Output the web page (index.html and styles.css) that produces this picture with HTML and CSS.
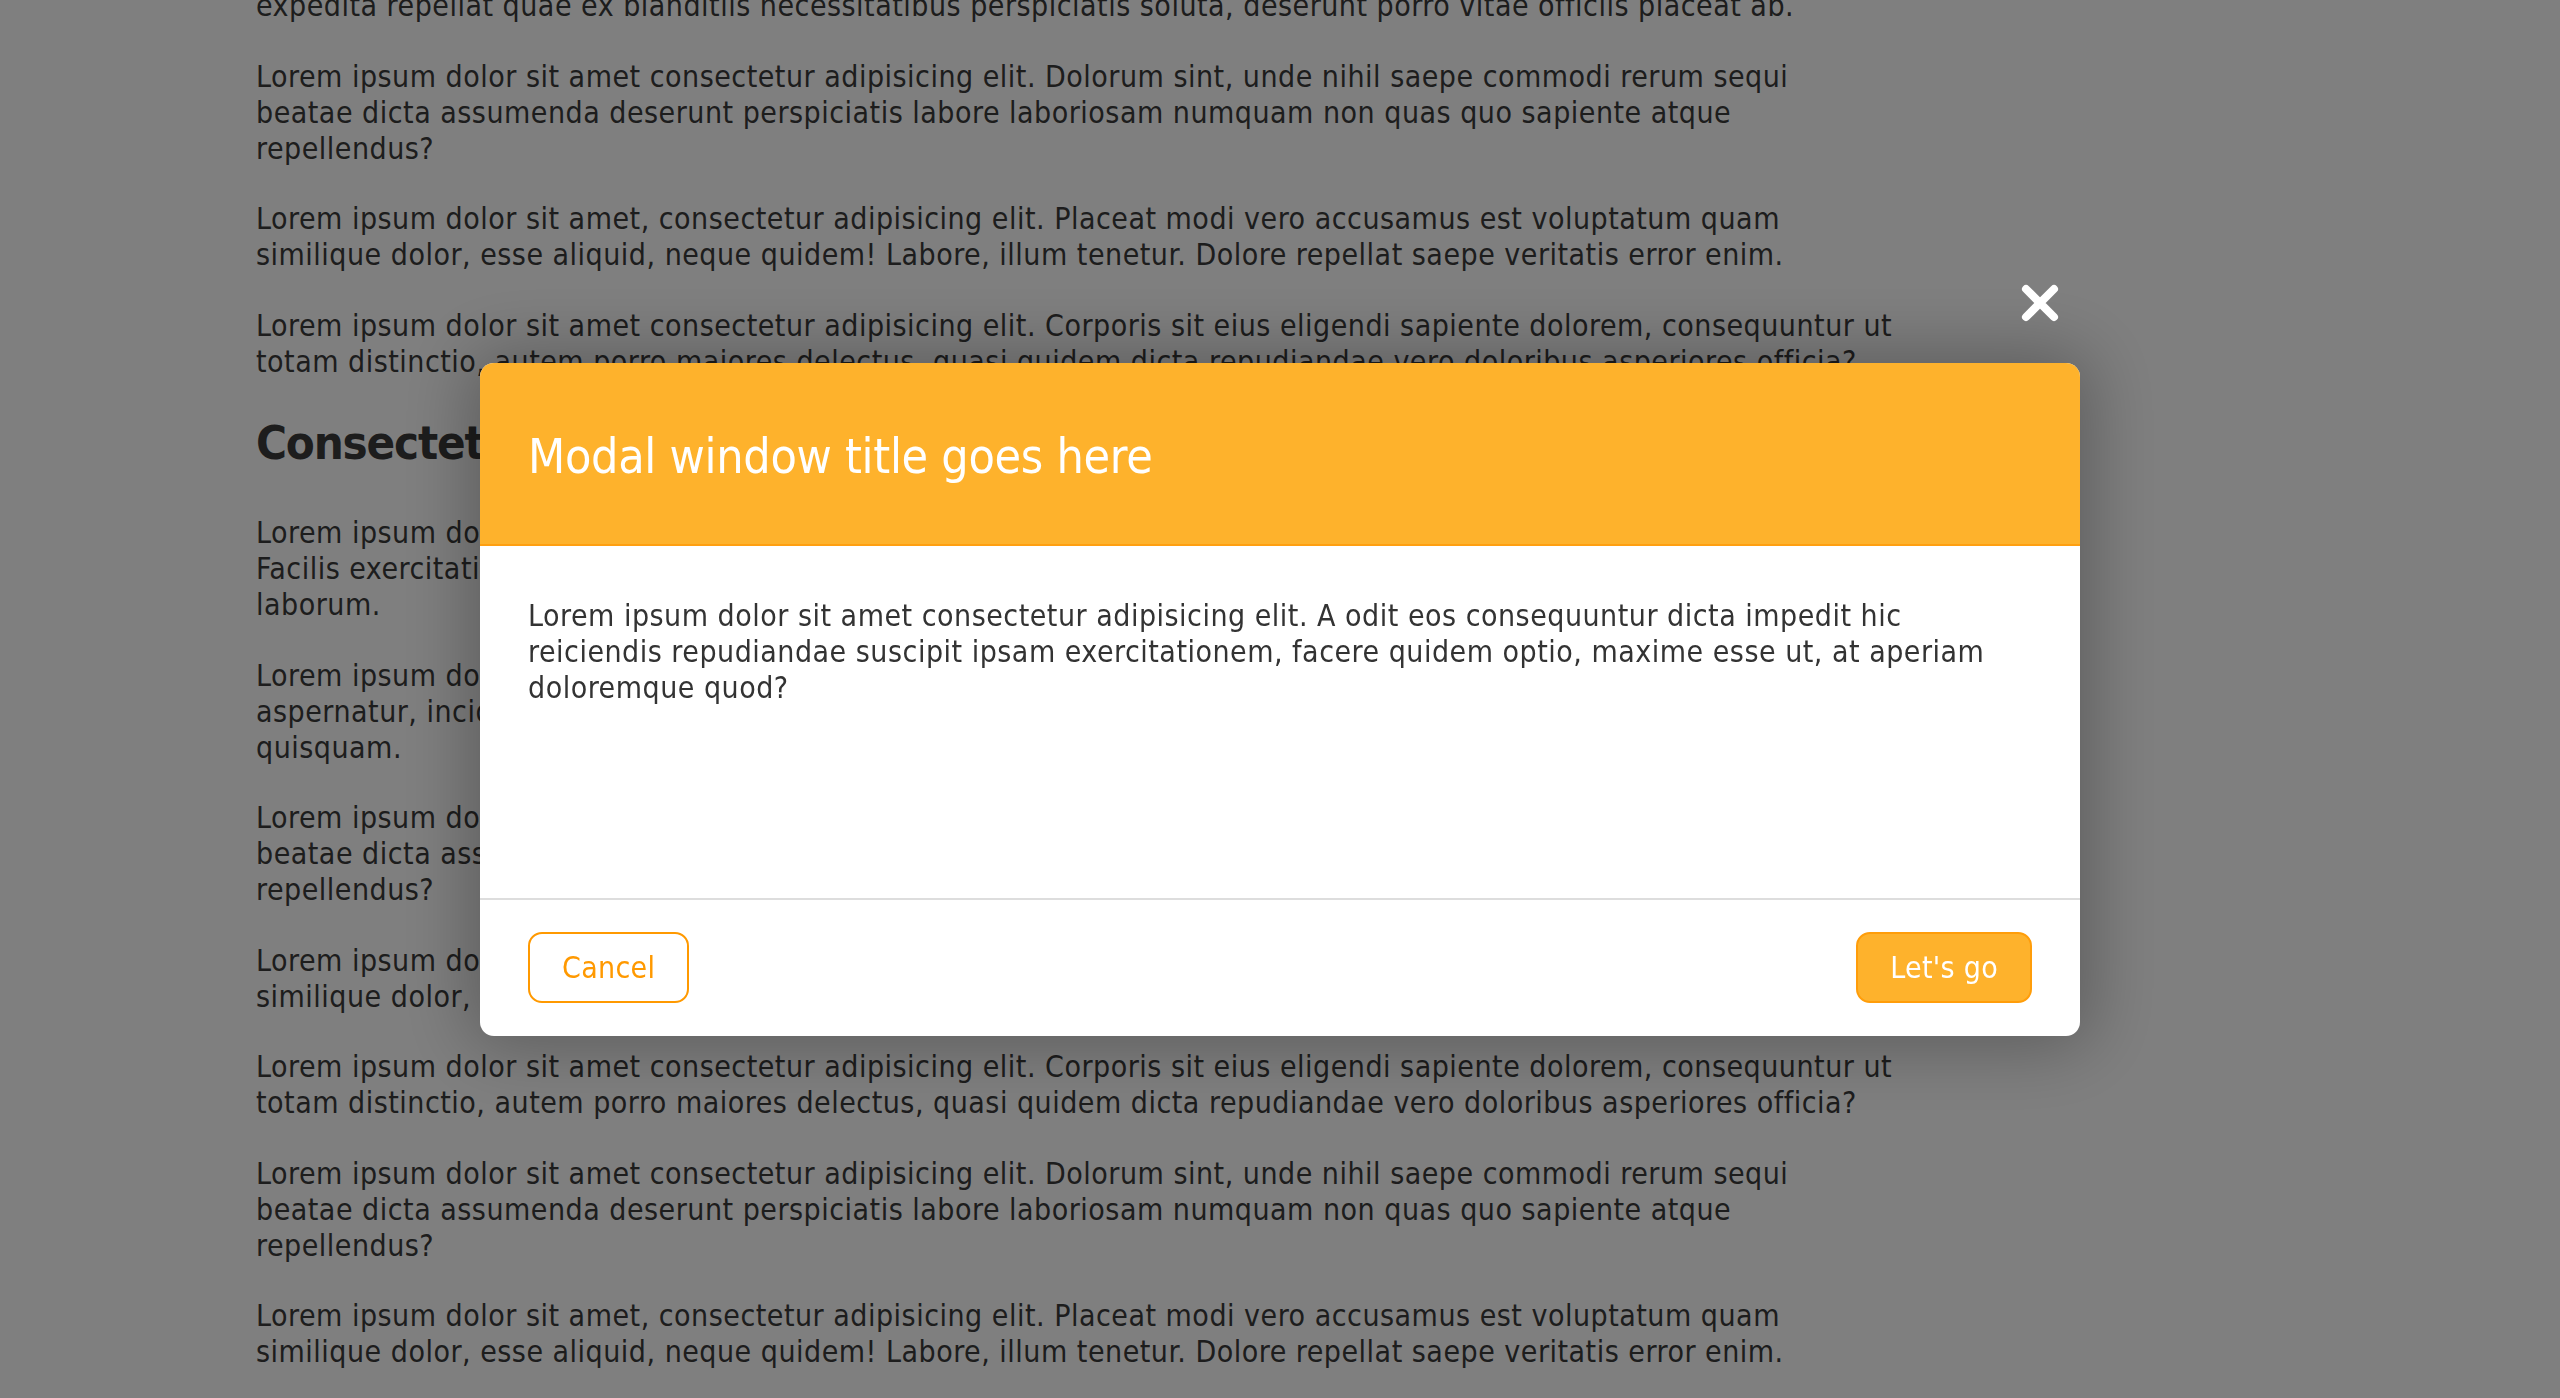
FILE: index.html
```html
<!DOCTYPE html>
<html lang="en">
<head>
<meta charset="utf-8">
<title>Modal window</title>
<link rel="stylesheet" href="styles.css">
</head>
<body>
<main class="page">
  <article class="article">
    <p>Lorem ipsum dolor sit amet consectetur adipisicing elit. Magnam ullam dignissimos voluptatibus omnis quis
    expedita repellat quae ex blanditiis necessitatibus perspiciatis soluta, deserunt porro vitae officiis placeat ab.</p>
    <p>Lorem ipsum dolor sit amet consectetur adipisicing elit. Dolorum sint, unde nihil saepe commodi rerum sequi beatae dicta assumenda deserunt perspiciatis labore laboriosam numquam non quas quo sapiente atque repellendus?</p>
    <p>Lorem ipsum dolor sit amet, consectetur adipisicing elit. Placeat modi vero accusamus est voluptatum quam similique dolor, esse aliquid, neque quidem! Labore, illum tenetur. Dolore repellat saepe veritatis error enim.</p>
    <p>Lorem ipsum dolor sit amet consectetur adipisicing elit. Corporis sit eius eligendi sapiente dolorem, consequuntur ut totam distinctio, autem porro maiores delectus, quasi quidem dicta repudiandae vero doloribus asperiores officia?</p>
    <h2 class="section-title">Consectetur adipisicing elit</h2>
    <p>Lorem ipsum dolor sit amet consectetur adipisicing elit. Nostrum quibusdam ratione odit voluptatibus cumque. Facilis exercitationem at iure necessitatibus harum natus quae, possimus obcaecati quibusdam praesentium eaque laborum.</p>
    <p>Lorem ipsum dolor sit amet consectetur adipisicing elit. Ipsa ullam doloribus veniam, cumque dolores officia rem aspernatur, incidunt assumenda deserunt perspiciatis labore laboriosam numquam non quas quo sapiente atque quisquam.</p>
    <p>Lorem ipsum dolor sit amet consectetur adipisicing elit. Dolorum sint, unde nihil saepe commodi rerum sequi beatae dicta assumenda deserunt perspiciatis labore laboriosam numquam non quas quo sapiente atque repellendus?</p>
    <p>Lorem ipsum dolor sit amet, consectetur adipisicing elit. Placeat modi vero accusamus est voluptatum quam similique dolor, esse aliquid, neque quidem! Labore, illum tenetur. Dolore repellat saepe veritatis error enim.</p>
    <p>Lorem ipsum dolor sit amet consectetur adipisicing elit. Corporis sit eius eligendi sapiente dolorem, consequuntur ut totam distinctio, autem porro maiores delectus, quasi quidem dicta repudiandae vero doloribus asperiores officia?</p>
    <p>Lorem ipsum dolor sit amet consectetur adipisicing elit. Dolorum sint, unde nihil saepe commodi rerum sequi beatae dicta assumenda deserunt perspiciatis labore laboriosam numquam non quas quo sapiente atque repellendus?</p>
    <p>Lorem ipsum dolor sit amet, consectetur adipisicing elit. Placeat modi vero accusamus est voluptatum quam similique dolor, esse aliquid, neque quidem! Labore, illum tenetur. Dolore repellat saepe veritatis error enim.</p>
  </article>
</main>

<div class="overlay">
  <section class="modal" role="dialog" aria-labelledby="modal-title">
    <button class="modal-close" type="button" aria-label="Close">
      <svg viewBox="0 0 40 40" width="40" height="40" aria-hidden="true">
        <path d="M6 6 L34 34 M34 6 L6 34" stroke="#fff" stroke-width="8" stroke-linecap="round" fill="none"/>
      </svg>
    </button>
    <header class="modal-header">
      <h1 class="modal-title" id="modal-title">Modal window title goes here</h1>
    </header>
    <div class="modal-body">
      <p>Lorem ipsum dolor sit amet consectetur adipisicing elit. A odit eos consequuntur dicta impedit hic reiciendis repudiandae suscipit ipsam exercitationem, facere quidem optio, maxime esse ut, at aperiam doloremque quod?</p>
    </div>
    <footer class="modal-footer">
      <button class="btn btn-outline" type="button">Cancel</button>
      <button class="btn btn-primary" type="button">Let's go</button>
    </footer>
  </section>
</div>
</body>
</html>
```
FILE: styles.css
```css
html, body {
  margin: 0;
  padding: 0;
  height: 100%;
  overflow: hidden;
}

body {
  background: #ffffff;
  color: #3a3a3a;
  font-family: "DejaVu Sans Condensed", "DejaVu Sans", sans-serif;
  font-size: 30px;
  line-height: 36px;
  letter-spacing: 0.5px;
}

.page {
  padding: 0 256px;
}

.article {
  max-width: 1637px;
  margin-top: -48px;
}

.article p {
  margin: 0 0 34.5px;
}

.section-title {
  font-size: 47px;
  line-height: 58px;
  font-weight: bold;
  letter-spacing: -1.2px;
  margin: 34px 0 43px;
}

.overlay {
  position: fixed;
  inset: 0;
  background: rgba(0, 0, 0, 0.5);
  display: flex;
  align-items: center;
  justify-content: center;
}

.modal {
  position: relative;
  width: 1600px;
  background: #ffffff;
  border-radius: 14px;
  box-shadow: 0 0 70px 10px rgba(0, 0, 0, 0.28);
  display: flex;
  flex-direction: column;
}

.modal-close {
  position: absolute;
  top: -80px;
  right: 20px;
  width: 40px;
  height: 40px;
  padding: 0;
  border: 0;
  background: none;
  cursor: pointer;
  display: flex;
}

.modal-header {
  background: #feb22c;
  border-bottom: 2px solid #ff9f10;
  border-radius: 14px 14px 0 0;
  padding: 64px 48px 59px;
}

.modal-title {
  margin: 0;
  color: #ffffff;
  font-size: 48px;
  line-height: 58px;
  font-weight: normal;
  letter-spacing: -0.3px;
}

.modal-body {
  box-sizing: border-box;
  min-height: 352px;
  padding: 52px 48px;
  color: #333333;
}

.modal-body p {
  margin: 0;
}

.modal-footer {
  display: flex;
  justify-content: space-between;
  align-items: center;
  border-top: 2px solid #dddddd;
  padding: 32px 48px 33px;
}

.btn {
  font-family: inherit;
  font-size: 30px;
  line-height: 37px;
  letter-spacing: 0.3px;
  padding: 15px 32px;
  border: 2px solid #ff9900;
  border-radius: 14px;
  cursor: pointer;
}

.btn-outline {
  background: #ffffff;
  color: #ff9900;
}

.btn-primary {
  background: #feb22c;
  color: #ffffff;
  border-color: #ff9d0a;
}
```
